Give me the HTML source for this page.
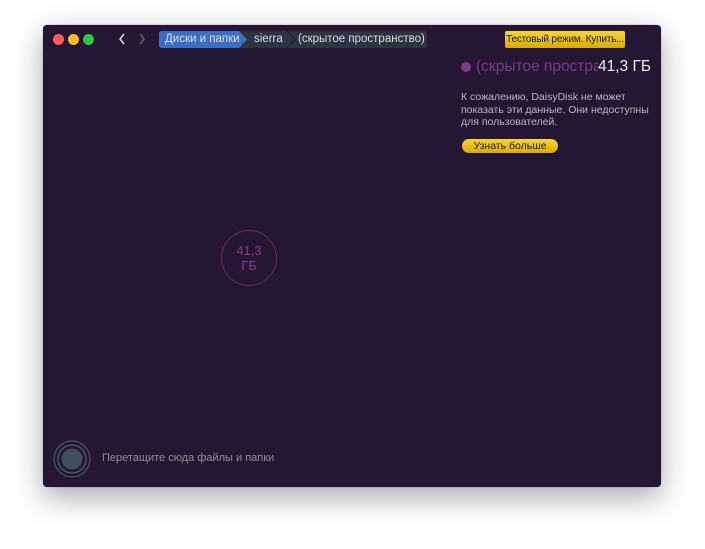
<!DOCTYPE html>
<html><head><meta charset="utf-8"><style>
body{margin:0;width:705px;height:549px;background:#fff;position:relative;overflow:hidden;font-family:"Liberation Sans",sans-serif}
.win{position:absolute;left:43px;top:25px;width:618px;height:462px;background:#251733;border-radius:4px;box-shadow:0 10px 30px rgba(0,0,0,.35),0 0 1px rgba(0,0,0,.5)}
.dot{position:absolute;top:9px;width:11px;height:11px;border-radius:50%}
.bc{position:absolute;top:6px;height:17px;font-size:11.5px;line-height:17px;color:#ddd;white-space:nowrap}
.t{position:absolute;color:#bbb;font-size:10.5px;line-height:12.5px;white-space:nowrap}
</style></head><body>
<div class="win">
<div class="dot" style="left:10px;background:#fc5f57"></div>
<div class="dot" style="left:25px;background:#fdbc2e"></div>
<div class="dot" style="left:40px;background:#28c840"></div>
<svg style="position:absolute;left:74px;top:7px" width="30" height="14"><path d="M7 2L3 7L7 12" stroke="#ddd" stroke-width="1.5" fill="none"/><path d="M23 2L27 7L23 12" stroke="#666" stroke-width="1.5" fill="none"/></svg>
<div class="bc" style="left:116px;width:268px;background:#2c3441;border-radius:3px"></div>
<svg style="position:absolute;left:116px;top:6px" width="140" height="17"><path d="M3 0H80L88 8.5L80 17H3Q0 17 0 14V3Q0 0 3 0Z" fill="#3b6fc6"/><path d="M128 0L136 8.5L128 17" stroke="#1c2028" fill="none"/></svg>
<div class="bc" style="left:122px">Диски и папки</div>
<div class="bc" style="left:211px">sierra</div>
<div class="bc" style="left:255px">(скрытое пространство)</div>
<div style="position:absolute;left:462px;top:6px;width:120px;height:17px;background:linear-gradient(#f6d43a,#d7ab0c);border-radius:2px;font-size:10px;line-height:17px;text-align:center;color:#222;white-space:nowrap;overflow:hidden;letter-spacing:-0.2px">Тестовый режим. Купить...</div>
<div style="position:absolute;left:418px;top:37px;width:10px;height:10px;border-radius:50%;background:#7b3a8a"></div>
<div style="position:absolute;left:433px;top:33px;width:122px;overflow:hidden;white-space:nowrap;font-size:15.5px;color:#7b3a8a">(скрытое пространство)</div>
<div style="position:absolute;left:555px;top:33px;font-size:15.5px;color:#eee;background:#251733;white-space:nowrap">41,3 ГБ</div>
<div class="t" style="left:418px;top:66px">К сожалению, DaisyDisk не может<br>показать эти данные. Они недоступны<br>для пользователей.</div>
<div style="position:absolute;left:419px;top:114px;width:96px;height:14px;border-radius:7px;background:linear-gradient(#f6d43a,#d7ab0c);font-size:10.5px;line-height:14px;text-align:center;color:#222;white-space:nowrap">Узнать больше</div>
<div style="position:absolute;left:178px;top:205px;width:56px;height:56px;border:1px solid #6b2a6e;border-radius:50%;color:#8a3a8c;font-size:13px;text-align:center;line-height:15px;box-sizing:border-box;padding-top:12px">41,3<br>ГБ</div>
<svg style="position:absolute;left:10px;top:415px" width="38" height="38"><circle cx="19" cy="19" r="18" stroke="#45556a" stroke-width="1.2" fill="none"/><circle cx="19" cy="19" r="14" stroke="#45556a" stroke-width="1.5" fill="none"/><circle cx="19" cy="19" r="10.5" fill="#3f4f5f"/></svg>
<div style="position:absolute;left:59px;top:427px;font-size:11px;color:#8f8f9a;white-space:nowrap">Перетащите сюда файлы и папки</div>
</div>
</body></html>
